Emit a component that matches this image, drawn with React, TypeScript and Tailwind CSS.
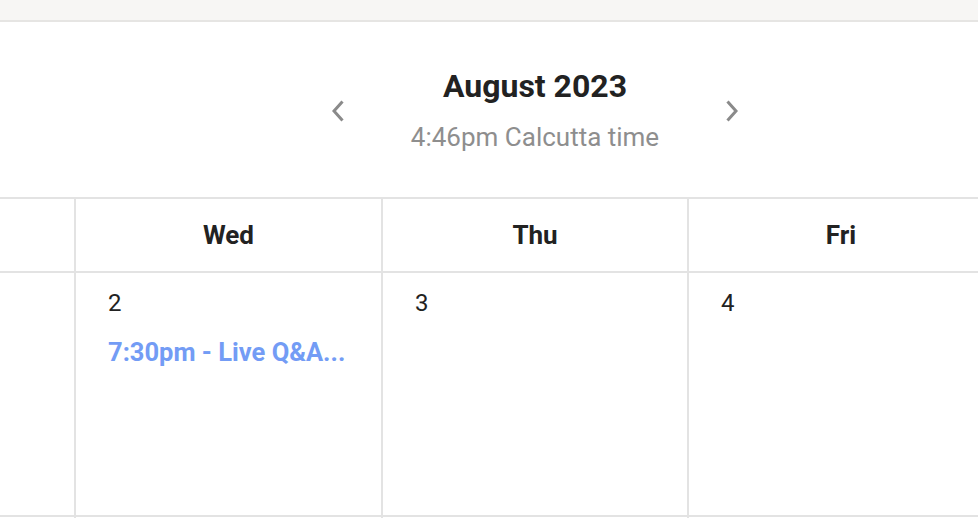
const DAYS = [
  { label: "Wed", date: 2, events: ["7:30pm - Live Q&A..."] },
  { label: "Thu", date: 3, events: [] as string[] },
  { label: "Fri", date: 4, events: [] as string[] },
];

function Chevron({ dir }: { dir: "left" | "right" }) {
  return (
    <svg width="12" height="22" viewBox="0 0 12 22" fill="none" className="mt-[3px] shrink-0">
      <path
        d={dir === "left" ? "M10.5 1.5L2 11l8.5 9.5" : "M1.5 1.5L10 11l-8.5 9.5"}
        stroke="#8a8a8a"
        strokeWidth="3"
      />
    </svg>
  );
}

export default function App() {
  return (
    <div className="h-[518px] w-[978px] overflow-hidden bg-white font-['Roboto',sans-serif] text-[#222]">
      {/* top strip */}
      <div className="h-[22px] border-b-2 border-[#e6e5e3] bg-[#f7f6f4]" />

      {/* month header */}
      <div className="flex h-[175px] items-center pl-[332px]">
        <button type="button" aria-label="Previous month">
          <Chevron dir="left" />
        </button>
        <div className="flex w-[382px] flex-col items-center">
          <h1 className="text-[32px] font-bold leading-[38px] text-[#222]">August 2023</h1>
          <p className="mt-[17px] text-[26px] leading-[30px] text-[#8e8e8e]">4:46pm Calcutta time</p>
        </div>
        <button type="button" aria-label="Next month">
          <Chevron dir="right" />
        </button>
      </div>

      {/* week grid */}
      <div className="border-t-2 border-[#e3e3e3]">
        <div className="flex border-b-2 border-[#e3e3e3]">
          <div className="h-[72px] w-[74px] shrink-0" />
          {DAYS.map((d, i) => (
            <div
              key={d.label}
              className={`flex h-[72px] shrink-0 items-center justify-center border-l-2 border-[#e3e3e3] text-[26px] font-bold ${i === 0 ? "w-[307px]" : "w-[306px]"}`}
            >
              {d.label}
            </div>
          ))}
        </div>
        <div className="flex border-b-2 border-[#e3e3e3]">
          <div className="h-[242px] w-[74px] shrink-0" />
          {DAYS.map((d, i) => (
            <div
              key={d.label}
              className={`h-[242px] shrink-0 border-l-2 border-[#e3e3e3] pl-[32px] pt-[15px] ${i === 0 ? "w-[307px]" : "w-[306px]"}`}
            >
              <div className="text-[24px] leading-[30px]">{d.date}</div>
              {d.events.map((ev) => (
                <div
                  key={ev}
                  className="mt-[20px] whitespace-nowrap text-[25.5px] font-bold leading-[28px] text-[#739cf5]"
                >
                  {ev}
                </div>
              ))}
            </div>
          ))}
        </div>
        <div className="flex">
          <div className="h-[20px] w-[74px] shrink-0" />
          {DAYS.map((d, i) => (
            <div
              key={d.label}
              className={`h-[20px] shrink-0 border-l-2 border-[#e3e3e3] ${i === 0 ? "w-[307px]" : "w-[306px]"}`}
            />
          ))}
        </div>
      </div>
    </div>
  );
}
